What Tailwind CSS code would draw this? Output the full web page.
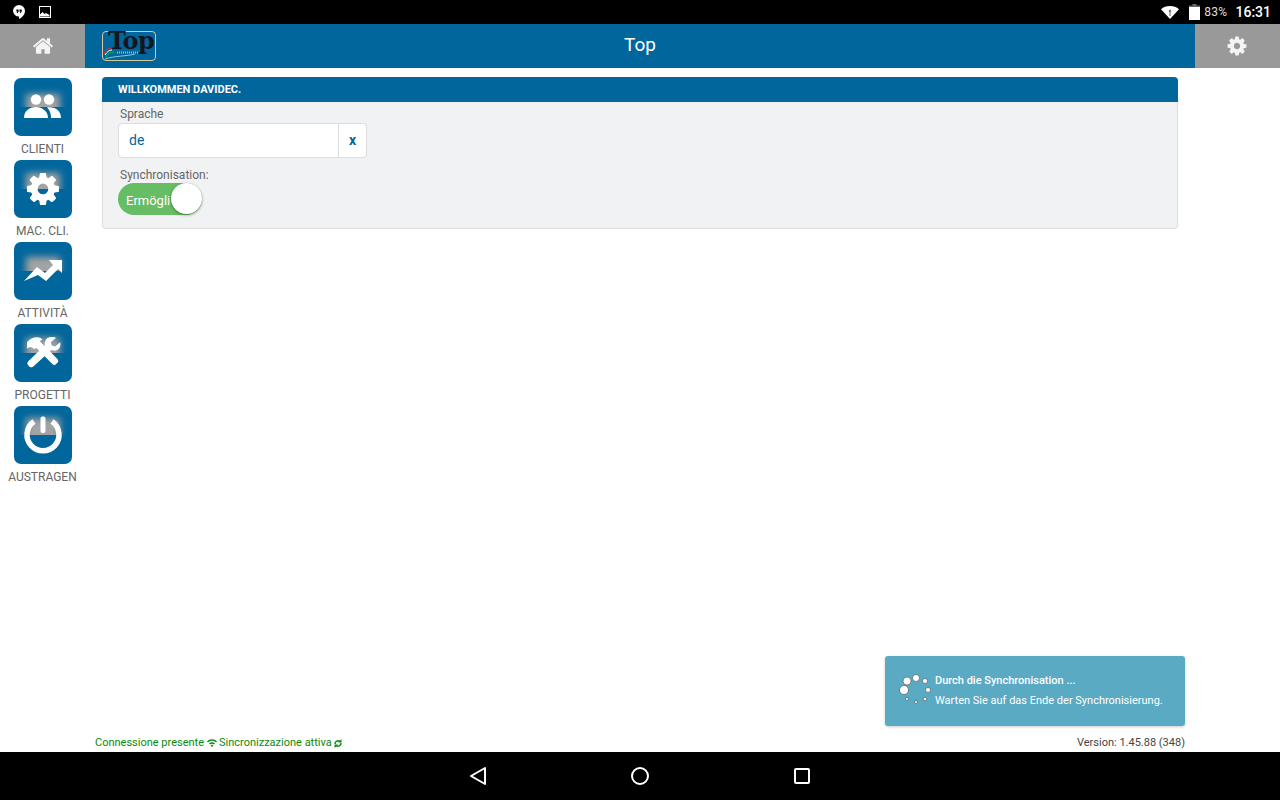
<!DOCTYPE html>
<html lang="en">
<head>
    <meta charset="UTF-8">
    <title>Top</title>
    <script src="https://cdn.jsdelivr.net/npm/@tailwindcss/browser@4"></script>
</head>
<body class="bg-white font-['Roboto',sans-serif] overflow-hidden">
    <!-- shared glare and icon shapes -->
    <svg width="0" height="0" class="absolute">
        <defs>
            <filter id="soft" x="-40%" y="-40%" width="180%" height="180%"><feGaussianBlur stdDeviation="3.500"/></filter>
            <clipPath id="tophalf"><rect x="0" y="0" width="58" height="29"/></clipPath>
            <path id="cog" d="M1152 896q0-106-75-181t-181-75-181 75-75 181 75 181 181 75 181-75 75-181zm512-109v222q0 12-8 23t-20 13l-185 28q-19 54-39 91 35 50 107 138 10 12 10 25t-9 23q-27 37-99 108t-94 71q-12 0-26-9l-138-108q-44 23-91 38-16 136-29 186-7 28-36 28h-222q-14 0-24.500-8.500t-11.500-21.500l-28-184q-49-16-90-37l-141 107q-10 9-25 9-14 0-25-11-126-114-165-168-7-10-7-23 0-12 8-23 15-21 51-66.500t54-70.500q-27-50-41-99l-183-27q-13-2-21-12.500t-8-23.500v-222q0-12 8-23t19-13l186-28q14-46 39-92-40-57-107-138-10-12-10-24 0-10 9-23 26-36 98.500-107.500t94.500-71.500q13 0 26 10l138 107q44-23 91-38 16-136 29-186 7-28 36-28h222q14 0 24.500 8.500t11.500 21.500l28 184q49 16 90 37l142-107q9-9 24-9 13 0 25 10 129 119 165 170 7 8 7 22 0 12-8 23-15 21-51 66.500t-54 70.500q26 50 41 98l183 28q13 2 21 12.500t8 23.500z"/>
        </defs>
    </svg>

    <div class="w-[1280px] h-[800px] flex flex-col">
        <!-- Status bar -->
        <div class="h-6 bg-black flex items-center justify-between text-white shrink-0">
            <div class="flex items-center gap-[14px] pl-[13px]">
                <svg width="12" height="14" viewBox="0 0 12 14"><path fill="#fff" d="M6 0a6 6 0 0 0-6 6 6 6 0 0 0 6 5.600V14c3-1.400 6-4.400 6-8a6 6 0 0 0-6-6Z"/><path fill="#000" d="M3.400 4.400h2.200v2.200L4.600 8H3.700l.6-1.400h-.9ZM6.500 4.400h2.200v2.200L7.700 8h-.9l.6-1.400h-.9Z"/></svg>
                <svg width="12" height="12" viewBox="0 0 12 12"><rect x="0.500" y="0.500" width="11" height="11" fill="none" stroke="#fff"/><path fill="#fff" d="M1 10.500V8.500L3.500 6l2 2 1.500-1L10.500 9v1.500Z"/></svg>
            </div>
            <div class="flex items-center pr-[9px]">
                <svg width="18" height="13" viewBox="0 0 18 13" class="mr-[10px]"><path fill="#fff" d="M9 13 0 3.200C2.400 1.200 5.500 0 9 0s6.600 1.200 9 3.200Z"/><path fill="#555" d="M9 3.200 7.500 5.500h1v3h1v-3h1Z"/><path fill="#555" d="M8.500 8.500h1v1.500h-1Z"/></svg>
                <svg width="11" height="16" viewBox="0 0 11 16" class="mr-[4px]"><path fill="#666" d="M3.500 0h4v1.500h3.500V4H0V1.500h3.500Z"/><rect y="3" width="11" height="13" fill="#fff"/></svg>
                <span class="text-[12px] text-[#ddd] tracking-[0.3px] mr-2">83%</span>
                <span class="text-[14px] font-medium">16:31</span>
            </div>
        </div>

        <!-- Header -->
        <div class="h-[44px] bg-[#01669c] flex items-center relative shrink-0">
            <div class="w-[85px] h-full bg-[#999999] flex items-center justify-center">
                <svg width="22" height="22" viewBox="0 0 1792 1792"><path fill="#f4f4f4" d="M1472 992v480q0 26-19 45t-45 19h-384v-384h-256v384h-384q-26 0-45-19t-19-45v-480q0-1 .5-3t.5-3l575-474 575 474q1 2 1 6zm223-69l-62 74q-8 9-21 11h-3q-13 0-21-7l-692-577-692 577q-12 8-24 7-13-2-21-11l-62-74q-8-10-7-23.500t11-21.500l719-599q32-26 76-26t76 26l244 204v-195q0-14 9-23t23-9h192q14 0 23 9t9 23v408l219 182q10 8 11 21.500t-7 23.500z"/></svg>
            </div>
            <div class="ml-[17px] w-[54px] h-[30px] rounded-[4px] border border-[#d8c9a0] relative bg-[#01669c]">
                <svg width="52" height="28" viewBox="0 0 52 28" class="absolute left-0 top-0"><path fill="none" stroke="#d33" d="M1 21c2-3 4-5 7-5"/><path fill="none" stroke="#fff" d="M2 23c2-3 4-5 7-5"/><path fill="none" stroke="#3a3" d="M3 25c2-3 4-5 8-5"/><path fill="none" stroke="#8cc" d="M2 27c8-3 24-3 30-5"/><path fill="none" stroke="#9bd" stroke-width="2" stroke-dasharray="1 1" d="M14 20.500h22"/></svg>
                <span class="absolute left-[5px] top-[-3px] text-[24px] leading-[24px] font-bold tracking-[-0.5px] text-[#15151f] font-['DejaVu_Serif',serif]">Top</span>
            </div>
            <div class="flex-1 text-center text-white text-[19px] pr-[71px] pb-px">Top</div>
            <div class="w-[85px] h-full bg-[#999999] flex items-center justify-center">
                <svg width="22" height="22" viewBox="0 0 1792 1792" class="mr-px"><use href="#cog" fill="#f4f4f4" fill-rule="evenodd"/></svg>
            </div>
        </div>

        <!-- Main -->
        <div class="flex-1 flex relative min-h-0">
            <!-- Side menu -->
            <div class="w-[85px] shrink-0 pt-[10px] flex flex-col gap-[3px] items-center">
                <div class="flex flex-col items-center">
                    <svg width="58" height="58" viewBox="0 0 58 58" class="rounded-[7px] bg-[#01669c] ml-[1px]">
                        <g clip-path="url(#tophalf)"><rect x="12" y="16" width="34" height="30" fill="#a3a3a3" filter="url(#soft)"/></g>
                        <circle cx="22" cy="21.500" r="5.200" fill="#fff"/><circle cx="35" cy="21.500" r="5.200" fill="#fff"/>
                        <path fill="#fff" d="M10 40c0-7 5-11 12-11 6 0 12 4 12 11Z"/>
                        <path fill="#fff" d="M33 29.500c8-1 14 3 14 10.500H37c0-4-1-8-4-10.500Z"/>
                    </svg>
                    <div class="mt-[5px] text-[12px] leading-4 text-[#666]">CLIENTI</div>
                </div>
                <div class="flex flex-col items-center">
                    <svg width="58" height="58" viewBox="0 0 58 58" class="rounded-[7px] bg-[#01669c] ml-[1px]">
                        <g clip-path="url(#tophalf)"><rect x="12" y="13" width="34" height="30" fill="#a3a3a3" filter="url(#soft)"/></g>
                        <g transform="translate(10.300 10.300) scale(0.0208)"><use href="#cog" fill="#fff" fill-rule="evenodd"/></g>
                    </svg>
                    <div class="mt-[5px] text-[12px] leading-4 text-[#666]">MAC. CLI.</div>
                </div>
                <div class="flex flex-col items-center">
                    <svg width="58" height="58" viewBox="0 0 58 58" class="rounded-[7px] bg-[#01669c] ml-[1px]">
                        <g clip-path="url(#tophalf)"><rect x="12" y="15" width="34" height="30" fill="#a3a3a3" filter="url(#soft)"/></g>
                        <path fill="#fff" d="M10 39 23 25l8 6 8-8-4-5h13v13l-4-4-12 12-8-6Z"/>
                    </svg>
                    <div class="mt-[5px] text-[12px] leading-4 text-[#666]">ATTIVITÀ</div>
                </div>
                <div class="flex flex-col items-center">
                    <svg width="58" height="58" viewBox="0 0 58 58" class="rounded-[7px] bg-[#01669c] ml-[1px]">
                        <g clip-path="url(#tophalf)"><rect x="12" y="14" width="34" height="30" fill="#a3a3a3" filter="url(#soft)"/></g>
                        <g transform="translate(2 2) scale(0.85)">
                            <path fill="#fff" d="M13 19c4-5 11-7 16-5l2 2-3 2 3 3 18 18c1 2 1 3 0 4l-2 2c-1 1-3 1-4 0L24 26l-3 1c-2-2-5-3-8 0Z"/>
                            <path fill="#fff" d="M47 14l-6 5 1 4 4 1 6-5c1 5-1 9-6 10-2 0-3 0-4-1L21 47c-2 2-4 2-5 1l-2-2c-1-2-1-3 1-5l19-18c-1-5 2-10 7-10 2 0 4 0 6 1Z"/>
                        </g>
                    </svg>
                    <div class="mt-[5px] text-[12px] leading-4 text-[#666]">PROGETTI</div>
                </div>
                <div class="flex flex-col items-center">
                    <svg width="58" height="58" viewBox="0 0 58 58" class="rounded-[7px] bg-[#01669c] ml-[1px]">
                        <g clip-path="url(#tophalf)"><rect x="12" y="12" width="34" height="30" fill="#a3a3a3" filter="url(#soft)"/></g>
                        <path fill="none" stroke="#fff" stroke-width="5.500" d="M20 15.500A16 16 0 1 0 38 15.500"/>
                        <rect x="26.500" y="10.500" width="5" height="16.500" rx="2" fill="#fff"/>
                    </svg>
                    <div class="mt-[5px] text-[12px] leading-4 text-[#666]">AUSTRAGEN</div>
                </div>
            </div>

            <!-- Content -->
            <div class="flex-1 flex flex-col min-w-0">
                <div class="flex-1 pl-[17px] pr-[102px] pt-[9px]">
                    <div class="rounded-[4px] bg-[#f1f2f4] border border-[#dddddd] border-t-0 h-[152px]">
                        <div class="h-[25px] -mx-px bg-[#01669c] rounded-t-[4px] text-white text-[11px] font-bold leading-[25px] pl-4">WILLKOMMEN DAVIDEC.</div>
                        <div class="pl-[15px]">
                            <div class="pl-[2px] text-[12px] leading-4 mt-[4px] text-[#666]">Sprache</div>
                            <div class="flex mt-[1px] w-[249px] h-[35px]">
                                <div class="w-[221px] bg-white border border-[#dddddd] rounded-l-[4px] text-[14px] leading-[33px] pl-[10px] text-[#01669c]">de</div>
                                <div class="w-[28px] bg-white border border-l-0 border-[#dddddd] rounded-r-[4px] text-[14px] font-bold leading-[33px] text-center text-[#01669c]">x</div>
                            </div>
                            <div class="pl-[2px] text-[12px] leading-4 mt-[9px] text-[#666]">Synchronisation:</div>
                            <div class="relative w-[84px] h-[32px] rounded-full bg-[#66bd63] pl-2 text-white text-[13px] leading-[36px]">
                                Ermögli
                                <span class="absolute left-[53px] top-0 w-[31px] h-[31px] rounded-full bg-white shadow-[0_1px_3px_rgba(0,0,0,0.4)]"></span>
                            </div>
                        </div>
                    </div>
                </div>
                <!-- Footer line -->
                <div class="h-5 flex items-center justify-between pl-[10px] pr-[95px] pt-[2px] text-[11px]">
                    <div class="flex items-center text-[#0a8a0a]">
                        <span>Connessione presente</span>
                        <svg width="10" height="8" viewBox="0 0 10 8" class="ml-[3px] mr-[2px]"><path fill="#0a8a0a" d="M0 2.500C2.800-.5 7.200-.5 10 2.500l-1 1C6.800 1.300 3.200 1.300 1 3.500ZM2 4.500c1.700-1.600 4.300-1.600 6 0l-1 1c-1.100-1-2.900-1-4 0ZM5 5.500 6.300 6.800 5 8 3.700 6.800Z"/></svg>
                        <span>Sincronizzazione attiva</span>
                        <svg width="8" height="9" viewBox="0 0 8 9" class="ml-[2px]"><path fill="none" stroke="#0a8a0a" stroke-width="1.500" d="M1 5a3 3 0 0 1 5-2.400M7 4a3 3 0 0 1-5 2.400"/><path fill="#0a8a0a" d="M7.500 0v3.500H4ZM.5 9V5.500H4Z"/></svg>
                    </div>
                    <div class="text-[#444]">Version: 1.45.88 (348)</div>
                </div>
            </div>

            <!-- Toast -->
            <div class="absolute left-[885px] top-[588px] w-[300px] h-[70px] rounded-[3px] bg-[#5aaac4] shadow-[0_1px_3px_rgba(0,0,0,0.2)] flex items-center text-white text-[11px]">
                <svg width="36" height="36" viewBox="0 0 36 36" class="ml-[13px] shrink-0" stroke="#333" stroke-width="0.500" fill="#fff">
                    <circle cx="9" cy="8" r="4"/><circle cx="18" cy="5" r="3.500"/><circle cx="27" cy="8" r="2.500"/><circle cx="30" cy="17" r="2.500"/><circle cx="27" cy="26" r="1.800"/><circle cx="18" cy="29" r="1.500"/><circle cx="9" cy="26" r="1.500"/><circle cx="6" cy="17" r="4.500"/>
                </svg>
                <div class="ml-[1px]">
                    <div class="font-medium leading-[14px]">Durch die Synchronisation ...</div>
                    <div class="leading-[14px] mt-[6px]">Warten Sie auf das Ende der Synchronisierung.</div>
                </div>
            </div>
        </div>

        <!-- Nav bar -->
        <div class="h-12 bg-black flex items-center justify-center shrink-0">
            <svg width="18" height="20" viewBox="0 0 18 20" class="mr-[143px]"><path fill="none" stroke="#fff" stroke-width="2" stroke-linejoin="round" d="M16 2v16L2 10Z"/></svg>
            <svg width="20" height="20" viewBox="0 0 20 20"><circle cx="10" cy="10" r="8" fill="none" stroke="#fff" stroke-width="2"/></svg>
            <svg width="18" height="18" viewBox="0 0 18 18" class="ml-[143px]"><rect x="2" y="2" width="14" height="14" rx="1" fill="none" stroke="#fff" stroke-width="2"/></svg>
        </div>
    </div>
</body>
</html>
